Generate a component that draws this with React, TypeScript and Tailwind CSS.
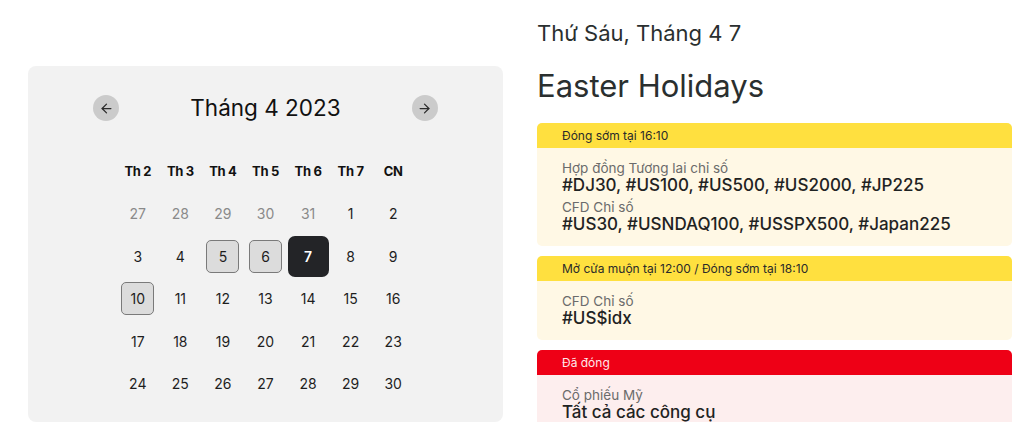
import React from 'react';
import { ArrowLeft, ArrowRight } from 'lucide-react';

type Day = { n: number; muted?: boolean };

const weekDays = ['Th 2', 'Th 3', 'Th 4', 'Th 5', 'Th 6', 'Th 7', 'CN'];

const days: Day[] = [
  { n: 27, muted: true },
  { n: 28, muted: true },
  { n: 29, muted: true },
  { n: 30, muted: true },
  { n: 31, muted: true },
  ...Array.from({ length: 30 }, (_, i) => ({ n: i + 1 })),
];

const holidays = [5, 6, 10];
const selected = 7;

interface Group {
  label: string;
  value: string;
}

interface Session {
  title: string;
  tone: 'yellow' | 'red';
  groups: Group[];
}

const sessions: Session[] = [
  {
    title: 'Đóng sớm tại 16:10',
    tone: 'yellow',
    groups: [
      { label: 'Hợp đồng Tương lai chỉ số', value: '#DJ30, #US100, #US500, #US2000, #JP225' },
      { label: 'CFD Chỉ số', value: '#US30, #USNDAQ100, #USSPX500, #Japan225' },
    ],
  },
  {
    title: 'Mở cửa muộn tại 12:00 / Đóng sớm tại 18:10',
    tone: 'yellow',
    groups: [{ label: 'CFD Chỉ số', value: '#US$idx' }],
  },
  {
    title: 'Đã đóng',
    tone: 'red',
    groups: [{ label: 'Cổ phiếu Mỹ', value: 'Tất cả các công cụ' }],
  },
];

function Calendar() {
  return (
    <div className="w-[475px] shrink-0 mt-[66px] bg-[#f2f2f2] rounded-lg pt-[25px] pb-4">
      <div className="flex items-center justify-between h-[34px] px-[65px]">
        <button className="h-[26px] w-[26px] rounded-full bg-[#cbcbcb] flex items-center justify-center text-[#2b2b2b]">
          <ArrowLeft className="h-[15px] w-[15px]" strokeWidth={2} />
        </button>
        <span className="text-[22.5px] text-[#111111] leading-none">Tháng 4 2023</span>
        <button className="h-[26px] w-[26px] rounded-full bg-[#cbcbcb] flex items-center justify-center text-[#2b2b2b]">
          <ArrowRight className="h-[15px] w-[15px]" strokeWidth={2} />
        </button>
      </div>

      <div className="mt-[25px] mx-auto w-[298px] grid grid-cols-7 auto-rows-[42.5px]">
        {weekDays.map((w) => (
          <div key={w} className="flex items-center justify-center text-[13px] font-bold text-[#111111] tracking-tight">
            {w}
          </div>
        ))}
        {days.map((d, i) => {
          const isSel = !d.muted && d.n === selected;
          const isHol = !d.muted && holidays.includes(d.n);
          return (
            <div key={i} className="flex items-center justify-center">
              {isSel ? (
                <span className="h-[41px] w-[41px] rounded-[7px] bg-[#232427] text-white font-semibold text-[14px] flex items-center justify-center">
                  {d.n}
                </span>
              ) : isHol ? (
                <span className="h-[33px] w-[33px] rounded-[5px] bg-[#dcdcdc] border border-[#7a7a7a] text-[#1e1e1e] text-[14px] flex items-center justify-center">
                  {d.n}
                </span>
              ) : (
                <span className={`text-[14px] ${d.muted ? 'text-[#8a8a8a]' : 'text-[#1e1e1e]'}`}>{d.n}</span>
              )}
            </div>
          );
        })}
      </div>
    </div>
  );
}

function SessionCard({ session }: { session: Session }) {
  const red = session.tone === 'red';
  return (
    <div className="rounded-[5px] overflow-hidden mb-[10px]">
      <div
        className={`h-[25px] flex items-center px-[25px] text-[12px] ${
          red ? 'bg-[#ee0016] text-[#ffe8ea]' : 'bg-[#ffe03f] text-[#2a2a2a]'
        }`}
      >
        {session.title}
      </div>
      <div className={`px-[25px] pt-[13px] pb-3 ${red ? 'bg-[#fdeeee]' : 'bg-[#fff8e5]'}`}>
        {session.groups.map((g, i) => (
          <div key={g.label} className={i > 0 ? 'mt-[5px]' : ''}>
            <div className="text-[13.5px] leading-[14px] text-[#6b6b6b]">{g.label}</div>
            <div className="text-[17px] leading-[20px] font-medium text-[#1f2323]">{g.value}</div>
          </div>
        ))}
      </div>
    </div>
  );
}

export default function App() {
  return (
    <div className="w-[1024px] h-[422px] overflow-hidden bg-white flex pl-[28px] gap-[34px] font-['Inter',sans-serif]">
      <Calendar />
      <div className="w-[475px] shrink-0 pt-[19px]">
        <div className="text-[22px] leading-[28px] text-[#2a2f2f]">Thứ Sáu, Tháng 4 7</div>
        <div className="mt-[21px] text-[31px] leading-[36px] text-[#2a2f2f]">Easter Holidays</div>
        <div className="mt-[19px]">
          {sessions.map((s) => (
            <SessionCard key={s.title} session={s} />
          ))}
        </div>
      </div>
    </div>
  );
}
